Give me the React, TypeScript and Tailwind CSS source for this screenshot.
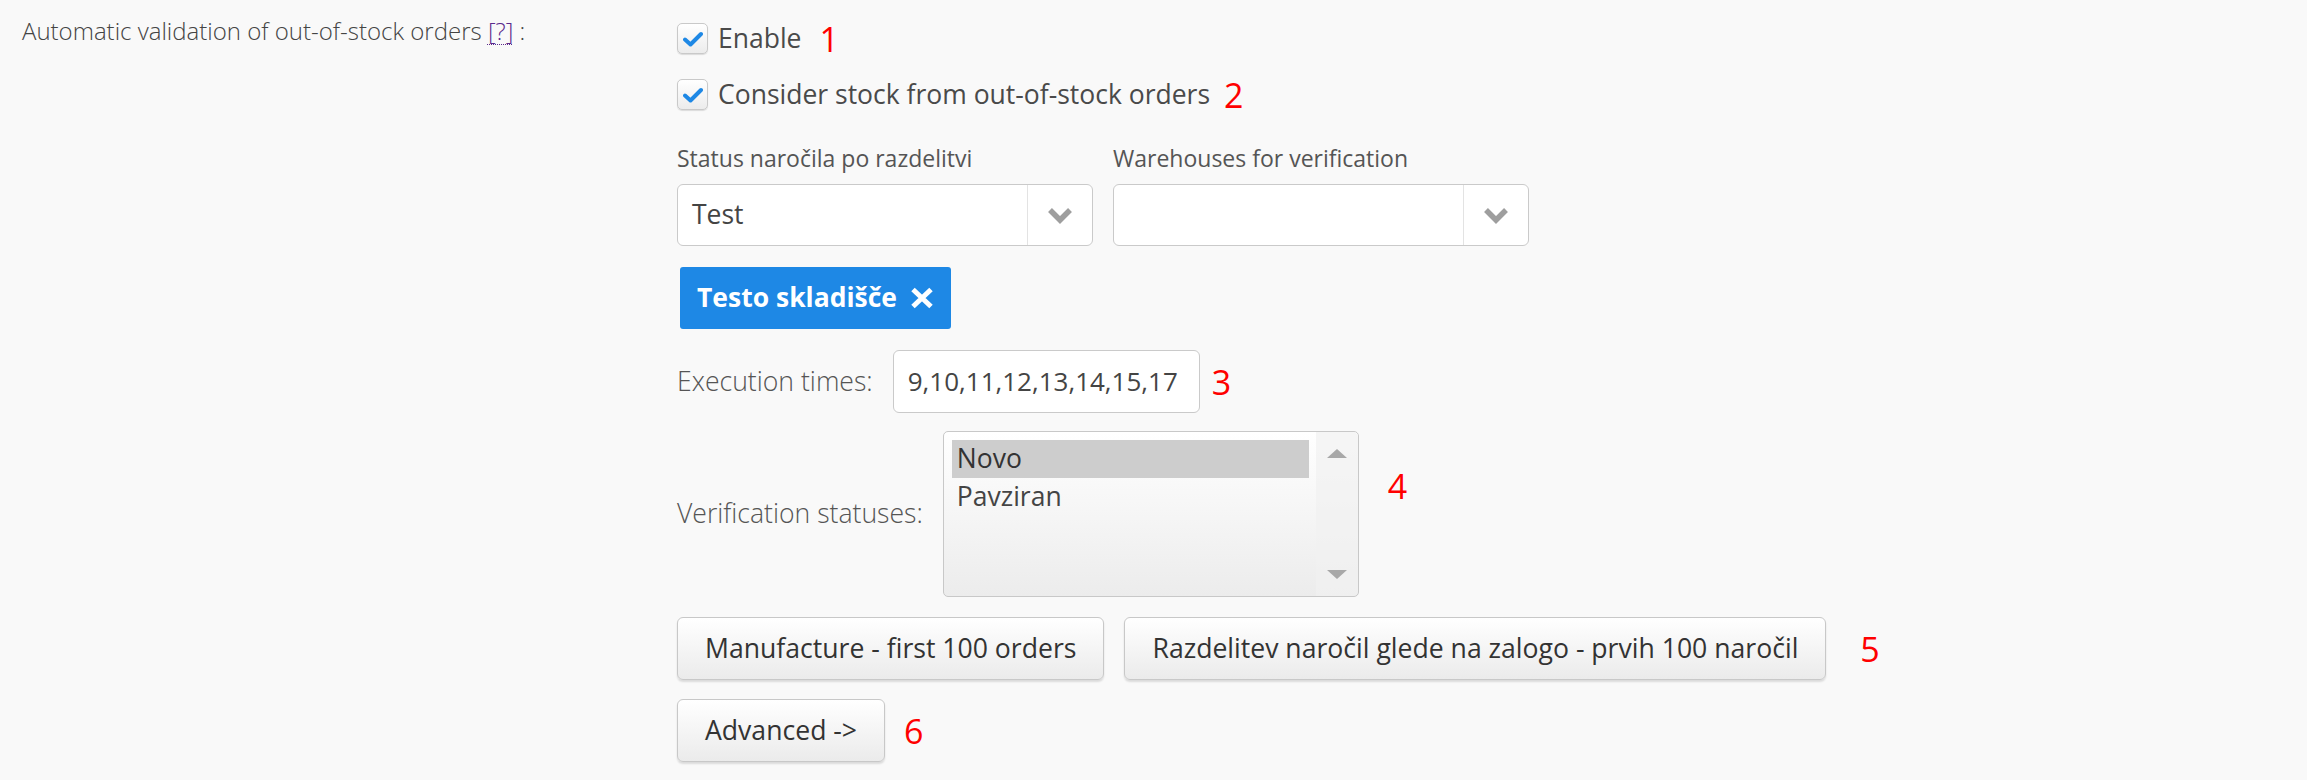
import { ReactNode } from "react";

function Checkbox() {
  return (
    <span className="flex h-[31px] w-[31px] shrink-0 items-center justify-center rounded-[5px] border border-[#c9c9c9] bg-gradient-to-b from-white to-[#ececec] shadow-[0_1px_1px_rgba(0,0,0,0.12)]">
      <svg width="20" height="16" viewBox="0 0 20 16" fill="none">
        <path
          d="M2 8.5 L7.5 13.5 L18 3"
          stroke="#1e88e5"
          strokeWidth="4"
          strokeLinecap="round"
          strokeLinejoin="round"
        />
      </svg>
    </span>
  );
}

function Mark({ n, className = "" }: { n: number; className?: string }) {
  return (
    <span className={`text-[34px] leading-none text-[#ff0000] ${className}`}>
      {n}
    </span>
  );
}

function Chevron() {
  return (
    <svg width="26" height="17" viewBox="0 0 26 17" fill="none">
      <path
        d="M3 3 L13 13 L23 3"
        stroke="#9e9e9e"
        strokeWidth="5.5"
        strokeLinejoin="miter"
      />
    </svg>
  );
}

function Select({ value }: { value?: string }) {
  return (
    <div className="flex h-[62px] w-[416px] rounded-[6px] border border-[#cacaca] bg-white">
      <div className="flex flex-1 items-center pl-[14px] text-[26.5px] text-[#444]">
        {value}
      </div>
      <div className="flex w-[65px] items-center justify-center border-l border-[#e3e3e3]">
        <Chevron />
      </div>
    </div>
  );
}

function Button({ children }: { children: ReactNode }) {
  return (
    <button className="h-[63px] rounded-[6px] border border-[#c8c8c8] bg-gradient-to-b from-white to-[#ebebeb] px-[27px] text-[26.6px] text-[#333] shadow-[0_2px_2px_rgba(0,0,0,0.12)]">
      {children}
    </button>
  );
}

export default function App() {
  return (
    <div className="flex h-[780px] bg-[#f9f9f9] font-['Open_Sans',sans-serif] text-[#555]">
      <div className="w-[677px] shrink-0 pl-[22px] pt-[15px] text-[24px] font-light leading-[32px] text-[#444]">
        Automatic validation of out-of-stock orders{" "}
        <span className="text-[#5a2a8c] underline decoration-dotted decoration-1 underline-offset-4">
          [?]
        </span>{" "}
        :
      </div>

      <div className="flex flex-col pt-[23px]">
        <label className="flex h-[31px] items-center">
          <Checkbox />
          <span className="ml-[10px] text-[26.5px] text-[#4a4a4a]">Enable</span>
          <Mark n={1} className="ml-[18px]" />
        </label>
        <label className="mt-[25px] flex h-[31px] items-center">
          <Checkbox />
          <span className="ml-[10px] text-[26.5px] text-[#4a4a4a]">
            Consider stock from out-of-stock orders
          </span>
          <Mark n={2} className="ml-[14px]" />
        </label>

        <div className="mt-[32px] flex gap-[20px]">
          <div>
            <div className="text-[23px] leading-[32px] text-[#555]">
              Status naročila po razdelitvi
            </div>
            <div className="mt-[10px]">
              <Select value="Test" />
            </div>
          </div>
          <div>
            <div className="text-[23px] leading-[32px] text-[#555]">
              Warehouses for verification
            </div>
            <div className="mt-[10px]">
              <Select />
            </div>
          </div>
        </div>

        <div className="ml-[3px] mt-[21px] flex h-[62px] w-fit items-center gap-[13px] rounded-[3px] bg-[#1e88e5] pl-[17px] pr-[17px] text-[26.5px] font-bold text-white">
          Testo skladišče
          <svg width="24" height="22" viewBox="0 0 24 22" fill="none">
            <path
              d="M3 2.5 L21 19.5 M21 2.5 L3 19.5"
              stroke="white"
              strokeWidth="5"
            />
          </svg>
        </div>

        <div className="mt-[21px] flex items-center">
          <span className="text-[26.6px] font-light text-[#555]">
            Execution times:
          </span>
          <div className="ml-[20px] flex h-[63px] w-[307px] items-center overflow-hidden whitespace-nowrap rounded-[6px] border border-[#cacaca] bg-white pl-[14px] text-[26px] text-[#444]">
            9,10,11,12,13,14,15,17
          </div>
          <Mark n={3} className="ml-[12px]" />
        </div>

        <div className="mt-[18px] flex items-center">
          <span className="text-[26.6px] font-light text-[#555]">
            Verification statuses:
          </span>
          <div className="ml-[20px] flex h-[166px] w-[416px] rounded-[5px] border border-[#c8c8c8] bg-gradient-to-b from-white to-[#ececec]">
            <div className="flex-1 pl-[8px] pr-[7px] pt-[8px]">
              <div className="flex h-[38px] items-center bg-[#cdcdcd] pl-[5px] text-[26.5px] text-[#333]">
                Novo
              </div>
              <div className="flex h-[38px] items-center pl-[5px] text-[26.5px] text-[#444]">
                Pavziran
              </div>
            </div>
            <div className="flex w-[42px] flex-col items-center justify-between rounded-r-[5px] bg-[#f1f1f1]/70 py-[17px]">
              <svg width="20" height="9" viewBox="0 0 20 9">
                <path d="M10 0 L20 9 L0 9 Z" fill="#a8a8a8" />
              </svg>
              <svg width="20" height="9" viewBox="0 0 20 9">
                <path d="M0 0 L20 0 L10 9 Z" fill="#a8a8a8" />
              </svg>
            </div>
          </div>
          <Mark n={4} className="ml-[29px] -mt-[56px]" />
        </div>

        <div className="mt-[20px] flex items-center gap-[20px]">
          <Button>Manufacture - first 100 orders</Button>
          <Button>Razdelitev naročil glede na zalogo - prvih 100 naročil</Button>
          <Mark n={5} className="ml-[14px]" />
        </div>

        <div className="mt-[19px] flex items-center">
          <Button>Advanced -&gt;</Button>
          <Mark n={6} className="ml-[19px]" />
        </div>
      </div>
    </div>
  );
}
